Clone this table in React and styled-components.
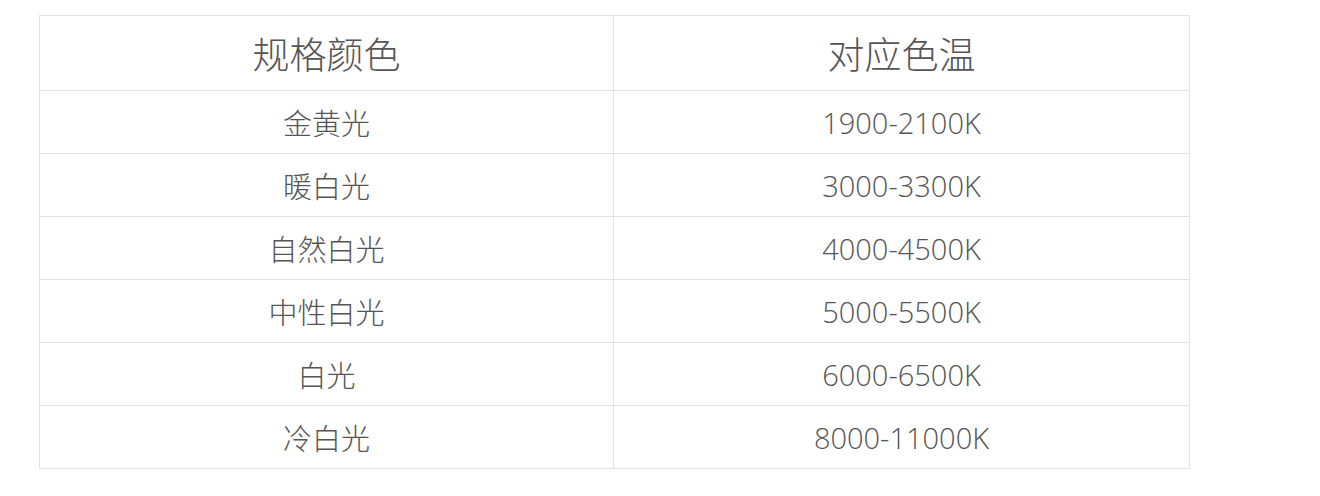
import React from "react";
import styled, { createGlobalStyle } from "styled-components";

const GlobalStyle = createGlobalStyle`
  html, body {
    margin: 0;
    padding: 0;
    background: #ffffff;
  }
  body {
    font-family: "Noto Sans CJK SC", "Open Sans", sans-serif;
  }
`;

const Page = styled.div`
  padding: 15px 0 0 39px;
  width: 1320px;
  height: 496px;
  box-sizing: border-box;
`;

const Table = styled.table`
  width: 1151px;
  border-collapse: collapse;
  table-layout: fixed;
  color: #555555;
  font-family: "Noto Sans CJK SC", "Open Sans", sans-serif;
  font-weight: 300;
`;

const HeadCell = styled.th`
  height: 74px;
  padding: 0;
  border: 1px solid #e2e2e2;
  font-size: 37px;
  font-weight: 300;
  text-align: center;
  vertical-align: middle;
`;

const Cell = styled.td`
  height: 62px;
  padding: 0;
  border: 1px solid #e2e2e2;
  font-family: ${(props) =>
    props.$num
      ? `"Open Sans", "Noto Sans CJK SC", sans-serif`
      : `"Noto Sans CJK SC", "Open Sans", sans-serif`};
  font-size: 29px;
  font-weight: 300;
  text-align: center;
  vertical-align: middle;
`;

const rows = [
  ["金黄光", "1900-2100K"],
  ["暖白光", "3000-3300K"],
  ["自然白光", "4000-4500K"],
  ["中性白光", "5000-5500K"],
  ["白光", "6000-6500K"],
  ["冷白光", "8000-11000K"],
];

const App = () => {
  return (
    <Page>
      <GlobalStyle />
      <Table>
        <colgroup>
          <col style={{ width: "574px" }} />
          <col />
        </colgroup>
        <thead>
          <tr>
            <HeadCell>规格颜色</HeadCell>
            <HeadCell>对应色温</HeadCell>
          </tr>
        </thead>
        <tbody>
          {rows.map(([name, temp]) => (
            <tr key={name}>
              <Cell>{name}</Cell>
              <Cell $num>{temp}</Cell>
            </tr>
          ))}
        </tbody>
      </Table>
    </Page>
  );
};

export default App;
